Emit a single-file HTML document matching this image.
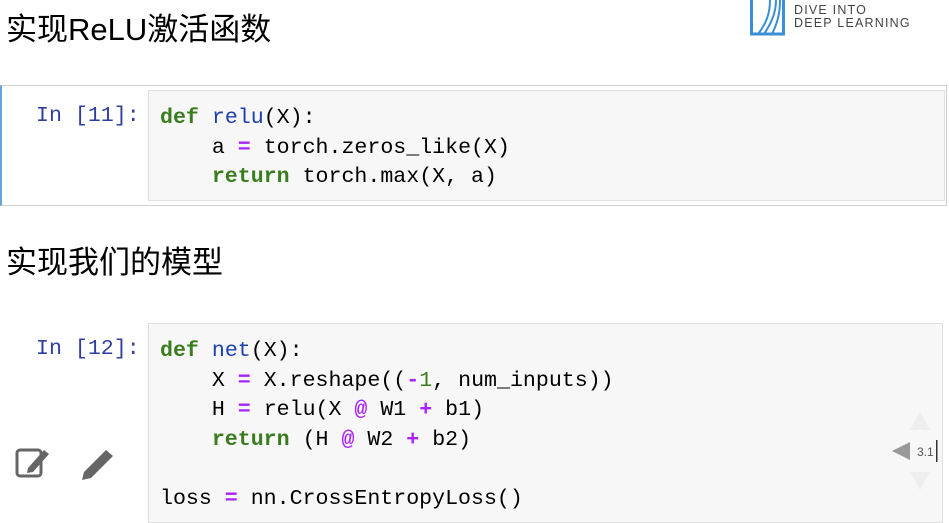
<!DOCTYPE html>
<html><head><meta charset="utf-8"><style>
body{margin:0;width:949px;height:508px;overflow:hidden;background:#fff;position:relative;font-family:"Liberation Sans","Noto Sans CJK SC",sans-serif}
.h{position:absolute;left:6px;font-size:31px;color:#000;line-height:36px}
.cell{position:absolute;left:0;width:947px;border:1px solid #cfcfcf;box-sizing:border-box}
.cell.sel{border-left:2px solid #66a3e0}
.code{position:absolute;left:148px;background:#f7f7f7;border:1px solid #e0e0e0;box-sizing:border-box;font-family:"Liberation Mono",monospace;font-size:21.6px;line-height:29.5px;padding:11px 0 0 11px;white-space:pre;color:#000}
.pr{position:absolute;font-family:"Liberation Mono",monospace;font-size:21.6px;color:#303f9f;line-height:29px}
.k{font-weight:bold;color:#3a7d1f}
.f{color:#1c3fb0}
.o{color:#aa22ff;font-weight:bold}
.n{color:#3a7d1f}
</style></head><body>
<div class="h" style="top:12px">实现ReLU激活函数</div>
<svg style="position:absolute;left:750px;top:0" width="36" height="36"><rect x="1.5" y="-2" width="32" height="36" fill="none" stroke="#3b8fd6" stroke-width="3"/><path d="M8 34 C16 24 20 14 20 0 M14 34 C22 22 26 12 26 0 M22 34 C28 22 30 12 30 0" fill="none" stroke="#3b8fd6" stroke-width="2"/></svg>
<div style="position:absolute;left:794px;top:4px;font-size:12.5px;letter-spacing:1.2px;color:#444;line-height:13px">DIVE INTO<br>DEEP LEARNING</div>
<div class="cell sel" style="top:85px;height:121px"></div>
<div class="pr" style="left:36px;top:102px">In [11]:</div>
<div class="code" style="top:90px;width:797px;height:111px;padding-top:13px"><span class="k">def</span> <span class="f">relu</span>(X):
    a <span class="o">=</span> torch.zeros_like(X)
    <span class="k">return</span> torch.max(X, a)</div>
<div class="h" style="top:245px">实现我们的模型</div>
<div class="pr" style="left:36px;top:335px">In [12]:</div>
<div class="code" style="top:323px;width:795px;height:200px;padding-top:13px"><span class="k">def</span> <span class="f">net</span>(X):
    X <span class="o">=</span> X.reshape((<span class="o">-</span><span class="n">1</span>, num_inputs))
    H <span class="o">=</span> relu(X <span class="o">@</span> W1 <span class="o">+</span> b1)
    <span class="k">return</span> (H <span class="o">@</span> W2 <span class="o">+</span> b2)

loss <span class="o">=</span> nn.CrossEntropyLoss()</div>
<svg style="position:absolute;left:14px;top:444px" width="44" height="36"><rect x="3" y="6" width="24" height="26" rx="3" fill="none" stroke="#666" stroke-width="3"/><path d="M14 24 L30 6 L35 10 L19 28 L13 29 Z" fill="#666"/></svg>
<svg style="position:absolute;left:78px;top:446px" width="40" height="36"><path d="M4 34 L6 26 L28 4 L35 10 L13 32 Z" fill="#666"/></svg>
<svg style="position:absolute;left:890px;top:412px" width="59" height="80"><path d="M30 0 L40 18 L20 18Z" fill="#eee"/><path d="M30 78 L40 60 L20 60Z" fill="#eee"/><path d="M20 30 L20 48 L2 39Z" fill="#999"/><text x="27" y="44" font-family="Liberation Sans" font-size="12" fill="#555">3.1</text><rect x="46" y="28" width="1.5" height="22" fill="#333"/></svg>
</body></html>
